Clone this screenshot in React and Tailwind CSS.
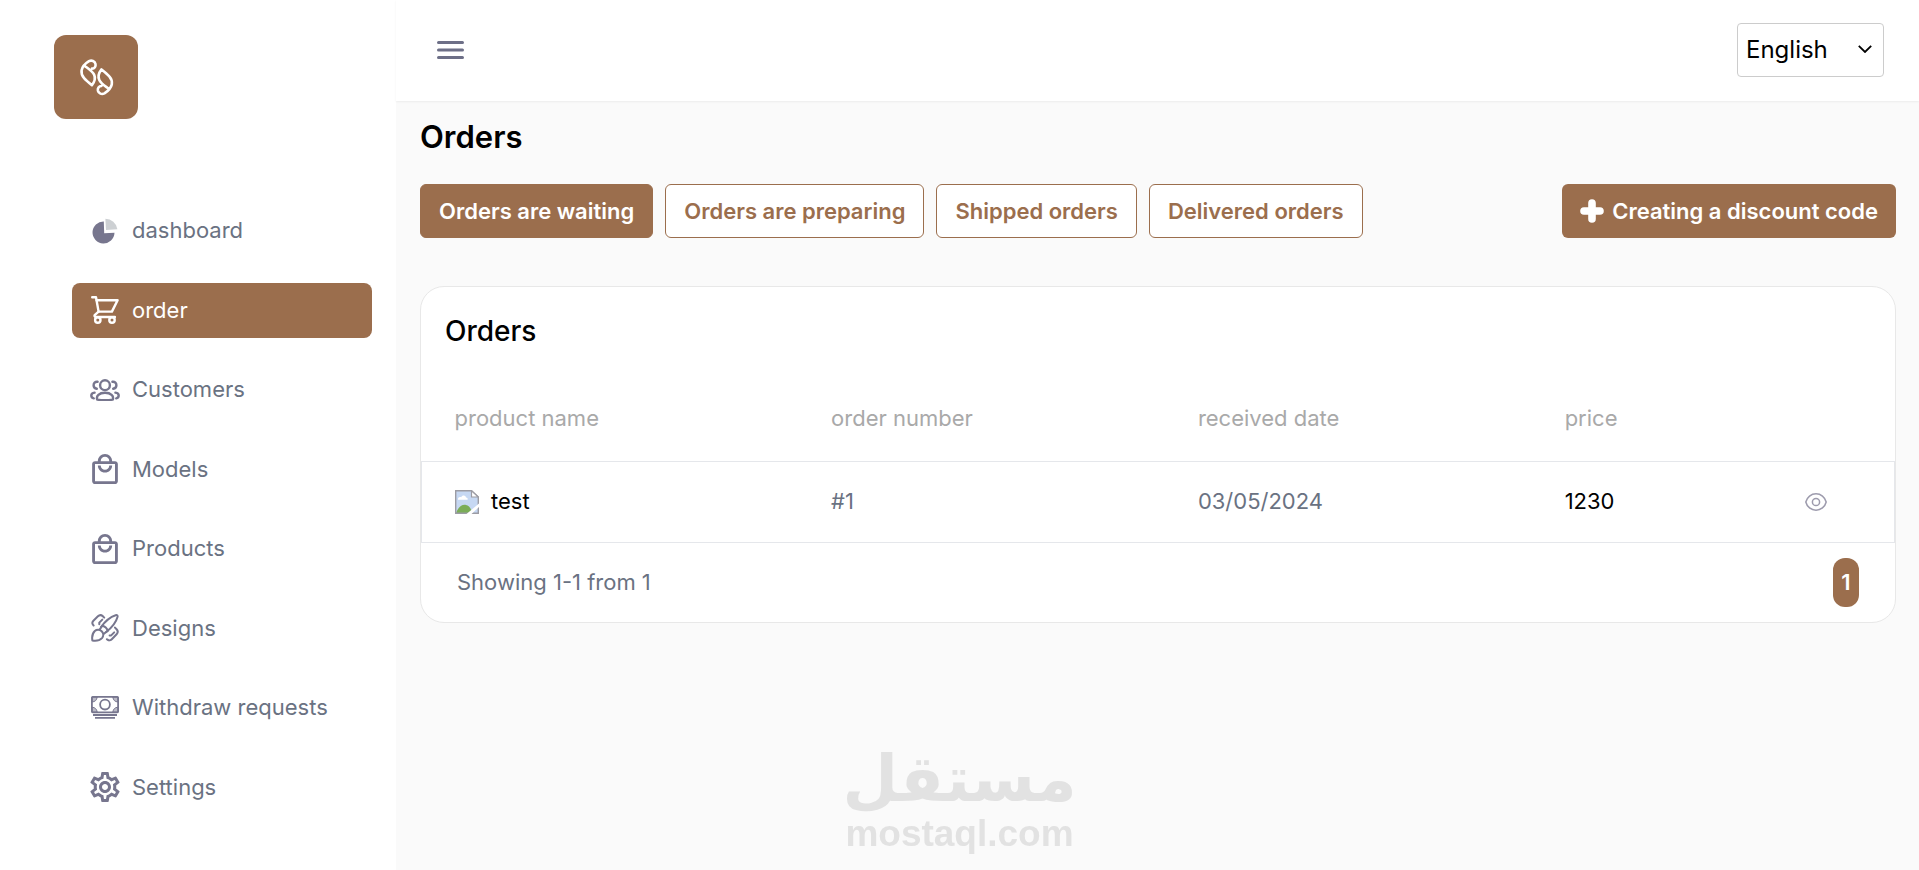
import React, { useState } from 'react';
import { MdOutlineLocalMall, MdOutlineSettings } from 'react-icons/md';

const DashboardIcon = () => (
    <svg viewBox="0 0 26 26" className="w-[26px] h-[26px]">
        <path d="M11.8 3.4a11 11 0 1 0 10.7 11.4l-10.3.4z" fill="currentColor" />
        <path d="M13.4.8A12.4 12.4 0 0 1 25.4 11.3L14 12z" fill="#cdd0d3" />
    </svg>
);

const CartIcon = () => (
    <svg viewBox="0 0 28 28" className="w-7 h-7" fill="none" stroke="currentColor" strokeWidth="2.4" strokeLinecap="round" strokeLinejoin="round">
        <path d="M1.2 1.2H5L7.600 15.600" />
        <path d="M5.600 4.200h21L20.900 15.600H7.600L3.900 18.800c-.8 1-.3 2.200 1 2.200h19" />
        <circle cx="6.8" cy="24" r="2.7" />
        <circle cx="21" cy="24" r="2.7" />
    </svg>
);

const CustomersIcon = () => (
    <svg viewBox="0 0 30 22" className="w-[30px] h-[22px]" fill="none" stroke="currentColor" strokeWidth="2.4" strokeLinecap="round">
        <circle cx="15" cy="6.2" r="4.9" />
        <path d="M7.200 20.600c-1.200-3.600 1.800-6.800 7.800-6.800s9 3.200 7.800 6.800c-4 .6-11.600.6-15.600 0z" strokeLinejoin="round" />
        <path d="M7.600 2.800C5 2.400 3.600 4.400 3.600 6.200c0 1.900 1.200 3.200 3.200 3.600" />
        <path d="M22.400 2.800c2.600-.4 4 1.600 4 3.400 0 1.900-1.200 3.200-3.200 3.600" />
        <path d="M4.600 13.600C2.400 13.900 1.300 15.200 1.300 16.600c0 1.600 1 2.600 2.500 2.800" />
        <path d="M25.400 13.600c2.200.3 3.300 1.600 3.300 3 0 1.600-1 2.600-2.500 2.800" />
    </svg>
);

const BagIcon = () => <MdOutlineLocalMall viewBox="3 1 18 21" className="w-[26px] h-[30px]" />;

const DesignsIcon = () => (
    <svg viewBox="0 0 28 28" className="w-7 h-7" fill="none" stroke="currentColor" strokeWidth="2" strokeLinecap="round" strokeLinejoin="round">
        <path d="M10 13C14 7.500 19 3 24.600 1.200c1.600-.5 2.300.3 1.900 1.800-1.500 5.600-5.500 10.400-11.300 15" />
        <path d="M8.600 15.600L11.400 11.600c2.600.8 4.500 2.500 5.600 5l-4.400 3.400" />
        <path d="M1.400 26.600c-.7-3.800.1-7.300 2.400-9.600 2-1.700 5-1.500 6.900.3 1.900 1.900 2 4.800.3 6.800-2.300 2.500-5.800 3.100-9.600 2.500z" />
        <path d="M2.600 11.500C.9 9.800 1 8.200 2.400 6.700L6.900 2.300c1.600-1.500 3.400-1.500 5 0l1.300 1.300" />
        <path d="M8.300 10.300V8.600l3-3" />
        <path d="M24 13.600l1.600 1.700c1.500 1.600 1.500 3.300 0 4.900l-4.800 5c-1.500 1.500-3.400 1.600-4.900.1" />
        <path d="M18.600 21.400h1.600l3-3" />
    </svg>
);

const WithdrawIcon = () => (
    <svg viewBox="0 0 28 23" className="w-7 h-[23px]" fill="none" stroke="currentColor" strokeWidth="1.8">
        <rect x=".9" y=".9" width="26.2" height="15.4" rx=".8" />
        <circle cx="14" cy="8.6" r="4.9" />
        <path d="M1 6C4 5.800 5.800 4.200 6.200 1H1zM27 6c-3-.2-4.800-1.800-5.200-5H27zM1 11.200c3 .2 4.800 1.800 5.200 5H1zM27 11.200c-3 .2-4.800 1.800-5.200 5H27z" fill="currentColor" fillOpacity=".5" strokeWidth="1" />
        <path d="M2 19h24M4 21.900h20" />
    </svg>
);

const SettingsIcon = () => <MdOutlineSettings viewBox="2 2 20 20" className="w-[30px] h-[30px]" />;

const EyeIcon = () => (
    <svg viewBox="0 0 22 18" className="w-[22px] h-[18px]" fill="none" stroke="currentColor" strokeWidth="1.5">
        <path d="M.8 9C2 4.200 6.200.8 11 .8S20 4.200 21.200 9c-1.200 4.800-5.400 8.200-10.200 8.200S2 13.800.8 9z" strokeLinejoin="round" />
        <circle cx="11" cy="9" r="3.6" />
    </svg>
);

const MissingImageIcon = () => (
    <svg viewBox="0 0 24 24" className="w-6 h-6" role="img" aria-label="missing image">
        <path d="M.7.7h15.800L23.300 7v16.300H.7z" fill="#c6d8f3" />
        <path d="M3 9c0-1.800 2-2.600 3.200-1.700C7 4.700 10.800 4.900 11 7.500c1.800 0 2 1.800 1.500 2.200H3z" fill="#fff" />
        <path d="M1 23.200c2-6 6-9 10-8.200 3 .6 5 3.400 6.500 8.200z" fill="#7bad58" />
        <path d="M.7.7h15.800L23.300 7v16.300H.7z" fill="none" stroke="#9c9ca4" strokeWidth="1.4" />
        <path d="M16.500.7V7h6.800z" fill="#fff" stroke="#9c9ca4" strokeWidth="1.2" />
        <path d="M24 13.500V17l-7.500 7h-5z" fill="#fff" />
    </svg>
);

const Logo = () => (
    <svg viewBox="0 0 84 84" className="w-full h-full" fill="none" stroke="#fff" strokeWidth="2.6" strokeLinecap="round" strokeLinejoin="round">
        <g id="leaf">
            <path d="M38 33.600c2.600 0 4-2.200 3.500-4.600-.7-3-3.800-4.200-6.500-2.800-3.200 2-6.600 5.400-7.400 9-.5 3 .4 5.600 2.500 8 2 2.400 5 4.800 7.800 7 2.800-3.600 3.800-7.200 2.200-10.600-1.600-3.400-5.300-5.600-9.300-8.600" />
        </g>
        <use href="#leaf" transform="rotate(180 42.700 42.300)" />
    </svg>
);

const navItems = [
    { label: 'dashboard', Icon: DashboardIcon },
    { label: 'order', Icon: CartIcon, active: true },
    { label: 'Customers', Icon: CustomersIcon },
    { label: 'Models', Icon: BagIcon },
    { label: 'Products', Icon: BagIcon },
    { label: 'Designs', Icon: DesignsIcon },
    { label: 'Withdraw requests', Icon: WithdrawIcon },
    { label: 'Settings', Icon: SettingsIcon },
];

const tabs = ['Orders are waiting', 'Orders are preparing', 'Shipped orders', 'Delivered orders'];

const orders = [{ id: 1, name: 'test', number: '#1', date: '03/05/2024', price: '1230' }];

function Sidebar() {
    return (
        <aside className="w-[396px] shrink-0 bg-white flex flex-col pt-[35px] pb-[55px]">
            <a href="#home" aria-label="Home" className="block w-[84px] h-[84px] ml-[54px] mb-[84px] rounded-xl bg-[#9b6e4d]">
                <Logo />
            </a>
            <nav className="flex-1 flex flex-col justify-between pl-[72px] pr-6">
                {navItems.map(({ label, Icon, active }) => (
                    <a
                        key={label}
                        href={`#${label}`}
                        className={`flex items-center gap-3 h-[55px] pl-[18px] rounded-lg text-[22px] ${active ? 'bg-[#9b6e4d] text-white' : 'text-gray-500'}`}
                    >
                        <span className={`w-[30px] flex justify-center ${active ? 'text-white' : 'text-[#77768e]'}`}>
                            <Icon />
                        </span>
                        {label}
                    </a>
                ))}
            </nav>
        </aside>
    );
}

function Header() {
    return (
        <header className="flex items-center justify-between h-[101px] pl-[41px] pr-[35px] pb-[2px] bg-white shadow-[0_1px_2px_rgba(0,0,0,0.06)]">
            <button type="button" aria-label="Toggle menu" className="text-[#6d6f87]">
                <svg viewBox="0 0 27 18" className="w-[27px] h-[18px]" stroke="currentColor" strokeWidth="3" strokeLinecap="round">
                    <path d="M1.500 1.500h24M1.500 9h24M1.500 16.500h24" />
                </svg>
            </button>
            <div className="relative">
                <select aria-label="Language" className="appearance-none w-[147px] h-[54px] pl-2 pr-10 bg-white border border-[#cccccc] rounded-sm text-2xl text-black">
                    <option>English</option>
                    <option>Arabic</option>
                </select>
                <svg viewBox="0 0 14 8" className="absolute right-3 top-[22px] w-[14px] h-2 pointer-events-none" fill="none" stroke="#000" strokeWidth="1.8">
                    <path d="M.8.8L7 7 13.200.8" />
                </svg>
            </div>
        </header>
    );
}

function OrdersTable() {
    return (
        <section className="mt-12 bg-white border border-[#e8e8e8] rounded-3xl">
            <h2 className="px-6 pt-6 pb-[26px] text-[28px] leading-10 font-medium text-black">Orders</h2>
            <table className="w-full table-fixed border-collapse text-left text-[22px]">
                <thead>
                    <tr className="h-[84px] text-[#a9a9a9]">
                        <th className="w-[25.5%] pl-[33px] font-normal">product name</th>
                        <th className="w-[24.9%] pl-[34px] font-normal">order number</th>
                        <th className="w-[24.9%] pl-[34px] font-normal">received date</th>
                        <th className="w-[16.3%] pl-[34px] font-normal">price</th>
                        <th aria-label="actions" />
                    </tr>
                </thead>
                <tbody>
                    {orders.map(order => (
                        <tr key={order.id} className="h-[81px] border border-gray-200 text-gray-500">
                            <td className="pl-[33px]">
                                <div className="flex items-center gap-3 text-black">
                                    <MissingImageIcon />
                                    {order.name}
                                </div>
                            </td>
                            <td className="pl-[34px]">{order.number}</td>
                            <td className="pl-[34px]">{order.date}</td>
                            <td className="pl-[34px] text-black">{order.price}</td>
                            <td className="pl-[34px]">
                                <button type="button" aria-label="View order" className="block text-[#9d9bad]">
                                    <EyeIcon />
                                </button>
                            </td>
                        </tr>
                    ))}
                </tbody>
            </table>
            <div className="flex items-center justify-between px-9 py-[15px] text-[22px] text-gray-500">
                <p>Showing 1-1 from 1</p>
                <button type="button" className="w-[26px] h-[49px] rounded-xl bg-[#9b6e4d] text-white font-semibold">1</button>
            </div>
        </section>
    );
}

export default function App() {
    const [activeTab, setActiveTab] = useState(tabs[0]);

    return (
        <div className="flex min-h-screen bg-[#fafafa] font-[Inter,sans-serif]">
            <Sidebar />
            <div className="flex-1 min-w-0">
                <Header />
                <main className="pl-6 pr-[23px] pt-4">
                    <h1 className="text-[31px] leading-10 font-semibold text-black">Orders</h1>

                    <div className="flex items-center justify-between mt-[27px]">
                        <div className="flex gap-3">
                            {tabs.map(tab => (
                                <button
                                    key={tab}
                                    type="button"
                                    onClick={() => setActiveTab(tab)}
                                    className={`h-[54px] px-[18px] rounded-md border border-[#9b6e4d] text-[22px] font-semibold ${tab === activeTab ? 'bg-[#9b6e4d] text-white' : 'bg-white text-[#9b6e4d]'}`}
                                >
                                    {tab}
                                </button>
                            ))}
                        </div>
                        <button type="button" className="flex items-center gap-2 h-[54px] px-[18px] rounded-md bg-[#9b6e4d] text-white text-[22px] font-semibold">
                            <svg viewBox="0 0 24 24" className="w-6 h-6" stroke="currentColor" strokeWidth="7.6" strokeLinecap="round">
                                <path d="M12 4v16M4 12h16" />
                            </svg>
                            Creating a discount code
                        </button>
                    </div>

                    <OrdersTable />
                </main>
            </div>

            {/* Watermark */}
            <div className="fixed bottom-[18px] left-0 right-0 flex flex-col items-center text-[#e2e2e2] font-bold pointer-events-none">
                <span lang="ar" dir="rtl" className="font-['DejaVu_Sans',sans-serif] text-[64px] leading-[72px]">مستقل</span>
                <span className="font-['Liberation_Sans',sans-serif] text-[37px] leading-[37px]">mostaql.com</span>
            </div>
        </div>
    );
}
